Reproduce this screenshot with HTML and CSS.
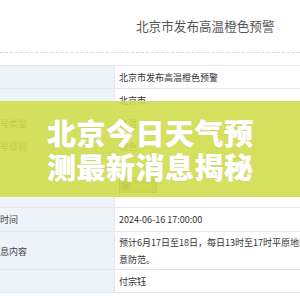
FILE: index.html
```html
<!DOCTYPE html>
<html lang="zh-CN">
<head>
<meta charset="utf-8">
<title>北京今日天气预测最新消息揭秘</title>
<link rel="stylesheet" href="styles.css">
</head>
<body>
<div class="page">
  <header class="header">
    <h1 class="title">北京市发布高温橙色预警</h1>
  </header>
  <div class="divider"></div>
  <div class="table">
    <div class="row"><div class="label">预警名</div><div class="value">北京市发布高温橙色预警</div></div>
    <div class="row"><div class="label">发布地</div><div class="value">北京市</div></div>
    <div class="row"><div class="label">预警信号类型</div><div class="value">高温</div></div>
    <div class="row"><div class="label">预警信号级别</div><div class="value">橙色</div></div>
    <div class="row row-tall"><div class="label">信号标</div><div class="value"><span class="thumb"><span class="thumb-icon"></span><span class="thumb-text">PDF 附件</span></span></div></div>
    <div class="row row-mid"><div class="label">发布的时间</div><div class="value">2024-06-16 17:00:00</div></div>
    <div class="row row-multi"><div class="label">预警信息内容</div><div class="value">预计6月17日至18日，每日13时至17时平原地区最高气温将达35℃以上，请注<br>意防范。</div></div>
    <div class="row"><div class="label">发布人</div><div class="value">付宗钰</div></div>
  </div>
  <div class="overlay">
    <p class="headline">北京今日天气预<br>测最新消息揭秘</p>
  </div>
</div>
</body>
</html>
```
FILE: styles.css
```css
html, body {
  margin: 0;
  padding: 0;
  background: #ffffff;
}
body {
  width: 300px;
  height: 300px;
  overflow: hidden;
  font-family: "Noto Sans CJK SC", "Noto Sans", sans-serif;
}
.page {
  position: relative;
  width: 300px;
  height: 300px;
  overflow: hidden;
}
.header {
  height: 52px;
  display: flex;
  align-items: center;
  padding-left: 136px;
  box-sizing: border-box;
}
.title {
  margin: 0;
  font-size: 12.6px;
  font-weight: 400;
  color: #555555;
  line-height: 16px;
  white-space: nowrap;
}
.divider {
  border-top: 1px dashed #dcdcdc;
  margin-bottom: 12px;
}
.table {
  margin-left: -27px;
  width: 520px;
  border-top: 1px solid #e3e6eb;
  font-size: 9px;
  color: #333333;
}
.row {
  display: grid;
  grid-template-columns: 142px 1fr;
  border-bottom: 1px solid #e3e6eb;
}
.label {
  background: #eef3fa;
  border-right: 1px solid #e3e6eb;
  padding: 3px 0 2px 0;
  line-height: 17px;
  white-space: nowrap;
  display: flex;
  align-items: center;
  color: #444444;
}
.value {
  padding: 3px 4px 2px 4px;
  line-height: 17px;
  white-space: nowrap;
  display: flex;
  align-items: center;
}
.row-multi .value {
  display: block;
  padding: 2px 4px 1px 4px;
}
.row-mid .label,
.row-mid .value {
  padding-top: 3px;
  padding-bottom: 3px;
}
.row-tall .value {
  padding-top: 20px;
  padding-bottom: 14px;
}
.thumb {
  display: inline-flex;
  align-items: center;
  gap: 2px;
  height: 15px;
  width: 38px;
  box-sizing: border-box;
  padding: 0 2px;
  border: 1px solid #8e8c66;
  background: #b9b68a;
}
.thumb-icon {
  width: 8px;
  height: 8px;
  background: #7e7c58;
}
.thumb-text {
  font-size: 5px;
  line-height: 6px;
  color: #e9e6c8;
}
.overlay {
  position: absolute;
  left: 0;
  top: 101px;
  width: 300px;
  height: 96px;
  background: rgba(207, 221, 72, 0.88);
  display: flex;
  align-items: center;
  justify-content: center;
}
.headline {
  margin: 0;
  color: #ffffff;
  font-size: 29px;
  font-weight: 900;
  line-height: 34px;
  text-align: center;
  letter-spacing: 0.5px;
  text-shadow: 0 0 1px rgba(120, 130, 40, 0.35), 0.4px 0 0 #ffffff;
}
```
